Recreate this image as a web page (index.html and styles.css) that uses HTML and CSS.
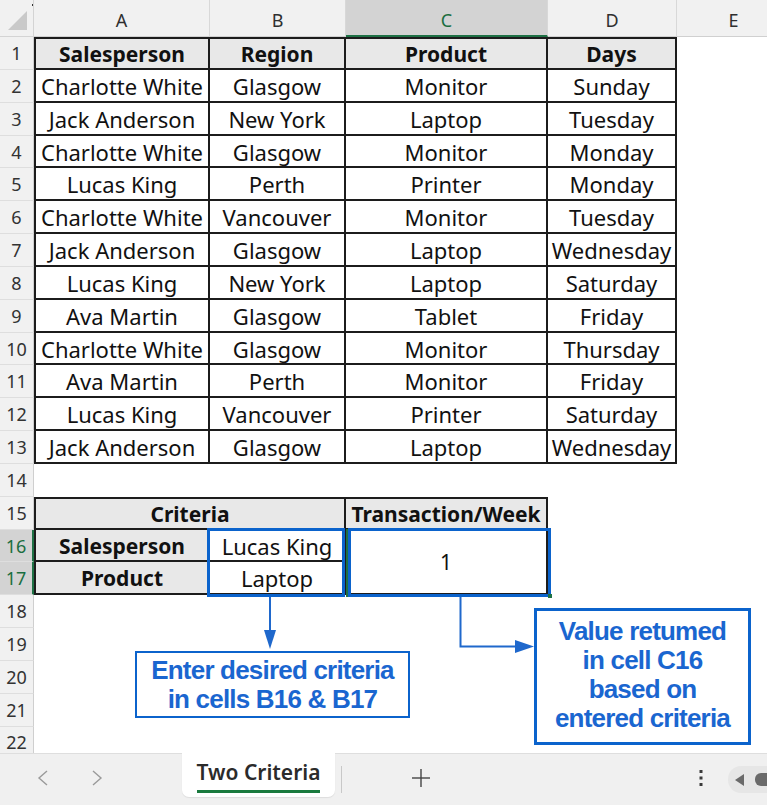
FILE: index.html
```html
<!DOCTYPE html>
<html lang="en">
<head>
<meta charset="utf-8">
<title>Two Criteria</title>
<link rel="stylesheet" href="styles.css">
</head>
<body>
<div class="app">
  <div class="sheet">
    <div class="grid">
      <div class="corner"><span class="tri"></span><span class="dot"></span></div>
      <div class="ch">A</div><div class="ch">B</div><div class="ch sel">C</div><div class="ch">D</div><div class="ch">E</div>

      <div class="rh">1</div><div class="c t tl tt g">Salesperson</div><div class="c t tt g">Region</div><div class="c t tt g">Product</div><div class="c t tt g">Days</div><div class="c"></div>
      <div class="rh">2</div><div class="c t tl">Charlotte White</div><div class="c t">Glasgow</div><div class="c t">Monitor</div><div class="c t">Sunday</div><div class="c"></div>
      <div class="rh">3</div><div class="c t tl">Jack Anderson</div><div class="c t">New York</div><div class="c t">Laptop</div><div class="c t">Tuesday</div><div class="c"></div>
      <div class="rh">4</div><div class="c t tl">Charlotte White</div><div class="c t">Glasgow</div><div class="c t">Monitor</div><div class="c t">Monday</div><div class="c"></div>
      <div class="rh">5</div><div class="c t tl">Lucas King</div><div class="c t">Perth</div><div class="c t">Printer</div><div class="c t">Monday</div><div class="c"></div>
      <div class="rh">6</div><div class="c t tl">Charlotte White</div><div class="c t">Vancouver</div><div class="c t">Monitor</div><div class="c t">Tuesday</div><div class="c"></div>
      <div class="rh">7</div><div class="c t tl">Jack Anderson</div><div class="c t">Glasgow</div><div class="c t">Laptop</div><div class="c t">Wednesday</div><div class="c"></div>
      <div class="rh">8</div><div class="c t tl">Lucas King</div><div class="c t">New York</div><div class="c t">Laptop</div><div class="c t">Saturday</div><div class="c"></div>
      <div class="rh">9</div><div class="c t tl">Ava Martin</div><div class="c t">Glasgow</div><div class="c t">Tablet</div><div class="c t">Friday</div><div class="c"></div>
      <div class="rh">10</div><div class="c t tl">Charlotte White</div><div class="c t">Glasgow</div><div class="c t">Monitor</div><div class="c t">Thursday</div><div class="c"></div>
      <div class="rh">11</div><div class="c t tl">Ava Martin</div><div class="c t">Perth</div><div class="c t">Monitor</div><div class="c t">Friday</div><div class="c"></div>
      <div class="rh">12</div><div class="c t tl">Lucas King</div><div class="c t">Vancouver</div><div class="c t">Printer</div><div class="c t">Saturday</div><div class="c"></div>
      <div class="rh">13</div><div class="c t tl">Jack Anderson</div><div class="c t">Glasgow</div><div class="c t">Laptop</div><div class="c t">Wednesday</div><div class="c"></div>

      <div class="rh">14</div><div class="c span5"></div>

      <div class="rh">15</div><div class="c t tl tt g span2">Criteria</div><div class="c t tt g">Transaction/Week</div><div class="c span2"></div>
      <div class="rh sel">16</div><div class="c t tl g">Salesperson</div><div class="c t">Lucas King</div><div class="c t rspan2 num">1</div><div class="c span2"></div>
      <div class="rh sel">17</div><div class="c t tl g">Product</div><div class="c t">Laptop</div><div class="c span2"></div>

      <div class="rh">18</div><div class="c span5"></div>
      <div class="rh">19</div><div class="c span5"></div>
      <div class="rh">20</div><div class="c span5"></div>
      <div class="rh">21</div><div class="c span5"></div>
      <div class="rh last">22</div><div class="c span5"></div>
    </div>

    <svg class="overlay" width="767" height="753" viewBox="0 0 767 753" xmlns="http://www.w3.org/2000/svg">
      <rect x="346" y="529" width="2" height="68" fill="#1e7145"/>
      <rect x="208.5" y="529.5" width="135" height="66" fill="none" stroke="#0b63cc" stroke-width="3"/>
      <rect x="349.5" y="529.5" width="200" height="66" fill="none" stroke="#0b63cc" stroke-width="3"/>
      <rect x="548" y="594" width="4" height="4" fill="#1e7145"/>
      <line x1="270" y1="597" x2="270" y2="632" stroke="#1f68cc" stroke-width="2"/>
      <polygon points="264,630 276,630 270,649" fill="#1f68cc"/>
      <polyline points="460.5,597 460.5,646.5 518,646.5" fill="none" stroke="#1f68cc" stroke-width="2"/>
      <polygon points="515,640 515,653 534,646.5" fill="#1f68cc"/>
    </svg>

    <div class="callout c1">Enter desired criteria<br>in cells B16 &amp; B17</div>
    <div class="callout c2">Value retumed<br>in cell C16<br>based on<br>entered criteria</div>
  </div>

  <div class="tabbar">
    <div class="nav first">
      <svg width="12" height="16" viewBox="0 0 12 16"><polyline points="10,1 2,8 10,15" fill="none" stroke="#9a9a9a" stroke-width="1.4"/></svg>
    </div>
    <div class="nav">
      <svg width="12" height="16" viewBox="0 0 12 16"><polyline points="2,1 10,8 2,15" fill="none" stroke="#9a9a9a" stroke-width="1.4"/></svg>
    </div>
    <div class="tab"><span class="tabtxt">Two Criteria</span></div>
    <div class="sep"></div>
    <div class="add">
      <svg width="20" height="20" viewBox="0 0 20 20"><line x1="10" y1="1" x2="10" y2="19" stroke="#444" stroke-width="1.4"/><line x1="1" y1="10" x2="19" y2="10" stroke="#444" stroke-width="1.4"/></svg>
    </div>
    <div class="spacer"></div>
    <div class="more">
      <svg width="6" height="18" viewBox="0 0 6 18"><rect x="1.5" y="1" width="3" height="3" fill="#3a3a3a"/><rect x="1.5" y="7.5" width="3" height="3" fill="#3a3a3a"/><rect x="1.5" y="14" width="3" height="3" fill="#3a3a3a"/></svg>
    </div>
    <div class="scroll">
      <svg width="10" height="12" viewBox="0 0 10 12"><polygon points="9,0 9,12 0,6" fill="#6a6a6a"/></svg>
      <span class="thumb"></span>
    </div>
  </div>
</div>
</body>
</html>
```

FILE: styles.css
```css
* { box-sizing: border-box; margin: 0; padding: 0; }
html, body { width: 767px; height: 805px; overflow: hidden; background: #ffffff; }
body { font-family: "Noto Sans", "DejaVu Sans", sans-serif; color: #000; }

.app { display: flex; flex-direction: column; width: 767px; height: 805px; }

.sheet { position: relative; height: 753px; overflow: hidden; flex: none; }

.grid {
  display: grid;
  grid-template-columns: 34px 176px 136px 202px 129px 114px;
  grid-template-rows: 37px 33px 33px 33px 32px 33px 33px 33px 33px 33px 32px 33px 33px 33px 33px 33px 32px 33px 33px 33px 33px 33px 33px;
  width: 791px;
}

.corner {
  position: relative;
  background: #f1f1f1;
  border-right: 1px solid #d4d4d4;
  border-bottom: 1px solid #d4d4d4;
}
.corner .tri {
  position: absolute; right: 6px; bottom: 6px;
  width: 0; height: 0;
  border-left: 19px solid transparent;
  border-bottom: 19px solid #c9c9c9;
}
.corner .dot { position: absolute; right: 0; top: 4px; width: 1px; height: 2px; background: #333; }

.ch {
  display: flex; align-items: center; justify-content: center;
  background: #f1f1f1;
  border-right: 1px solid #d8d8d8;
  border-bottom: 1px solid #d0d0d0;
  font-size: 18px; color: #2f2f2f;
  padding-top: 4px;
}
.ch.sel { background: #d3d3d3; color: #1a6e40; border-bottom: 2px solid #1e7145; padding-top: 5px; }

.rh {
  display: flex; align-items: center; justify-content: center;
  background: #f1f1f1;
  border-right: 1px solid #cfcfcf;
  border-bottom: 1px solid #dedede;
  font-size: 18px; color: #333;
}
.rh.last { align-items: flex-start; padding-top: 3px; }
.rh.sel { background: #d3d3d3; color: #1a6e40; border-right: 2px solid #1e7145; }

.c {
  display: flex; align-items: center; justify-content: center;
  font-size: 22px; white-space: nowrap; overflow: hidden;
  color: #111;
  padding-top: 1px;
}
.t { border-right: 2px solid #1c1c1c; border-bottom: 2px solid #1c1c1c; }
.tl { border-left: 2px solid #1c1c1c; }
.tt { border-top: 2px solid #1c1c1c; }
.g { background: #e8e8e8; font-weight: 700; font-size: 21px; }
.span2 { grid-column: span 2; }
.span5 { grid-column: span 5; }
.rspan2 { grid-row: span 2; }
.num { font-size: 21px; }

.overlay { position: absolute; left: 0; top: 0; pointer-events: none; }

.callout {
  position: absolute;
  display: flex; align-items: center; justify-content: center;
  background: #fff;
  border: 2.5px solid #0b63cc;
  color: #1a66d0;
  font-family: "Liberation Sans", Arial, sans-serif;
  font-weight: 700;
  font-size: 26px;
  letter-spacing: -0.8px;
  line-height: 29px;
  text-align: center;
}
.c1 { left: 135px; top: 651px; width: 275px; height: 67px; padding-top: 1px; }
.c2 { left: 534px; top: 608px; width: 217px; height: 137px; border-width: 3px; padding-bottom: 3px; }

.tabbar {
  flex: 1;
  display: flex; align-items: flex-start;
  background: #f0f0f0;
  border-top: 1px solid #dedede;
}
.nav { width: 30px; height: 50px; display: flex; align-items: center; justify-content: center; padding-bottom: 2px; }
.nav.first { margin-left: 28px; margin-right: 24px; }
.tab {
  margin-left: 70px;
  width: 153px; height: 44px;
  margin-top: -1px;
  background: #fff;
  border-radius: 0 0 7px 7px;
  box-shadow: 0 1px 1px rgba(0,0,0,0.08);
  display: flex; justify-content: center;
}
.tabtxt {
  display: inline-block;
  font-family: "Noto Sans", sans-serif;
  font-weight: 600; font-size: 21px; color: #2b2b2b;
  line-height: 28px;
  padding-top: 5px;
  height: 40px;
  border-bottom: 3px solid #1a7a3e;
}
.sep { width: 1px; height: 27px; margin-top: 12px; margin-left: 6px; background: #c8c8c8; }
.add { width: 30px; height: 50px; margin-left: 64px; display: flex; align-items: center; justify-content: center; padding-bottom: 2px; }
.spacer { flex: 1; }
.more { width: 20px; height: 50px; display: flex; align-items: center; justify-content: center; margin-right: 17px; padding-bottom: 2px; }
.scroll {
  width: 60px; height: 27px; margin-top: 12px; margin-right: -21px;
  background: #e6e6e6; border-radius: 13px 0 0 13px;
  display: flex; align-items: center; padding-left: 7px; gap: 10px;
}
.thumb { width: 20px; height: 13px; background: #6a6a6a; border-radius: 6px 0 0 6px; }
```
